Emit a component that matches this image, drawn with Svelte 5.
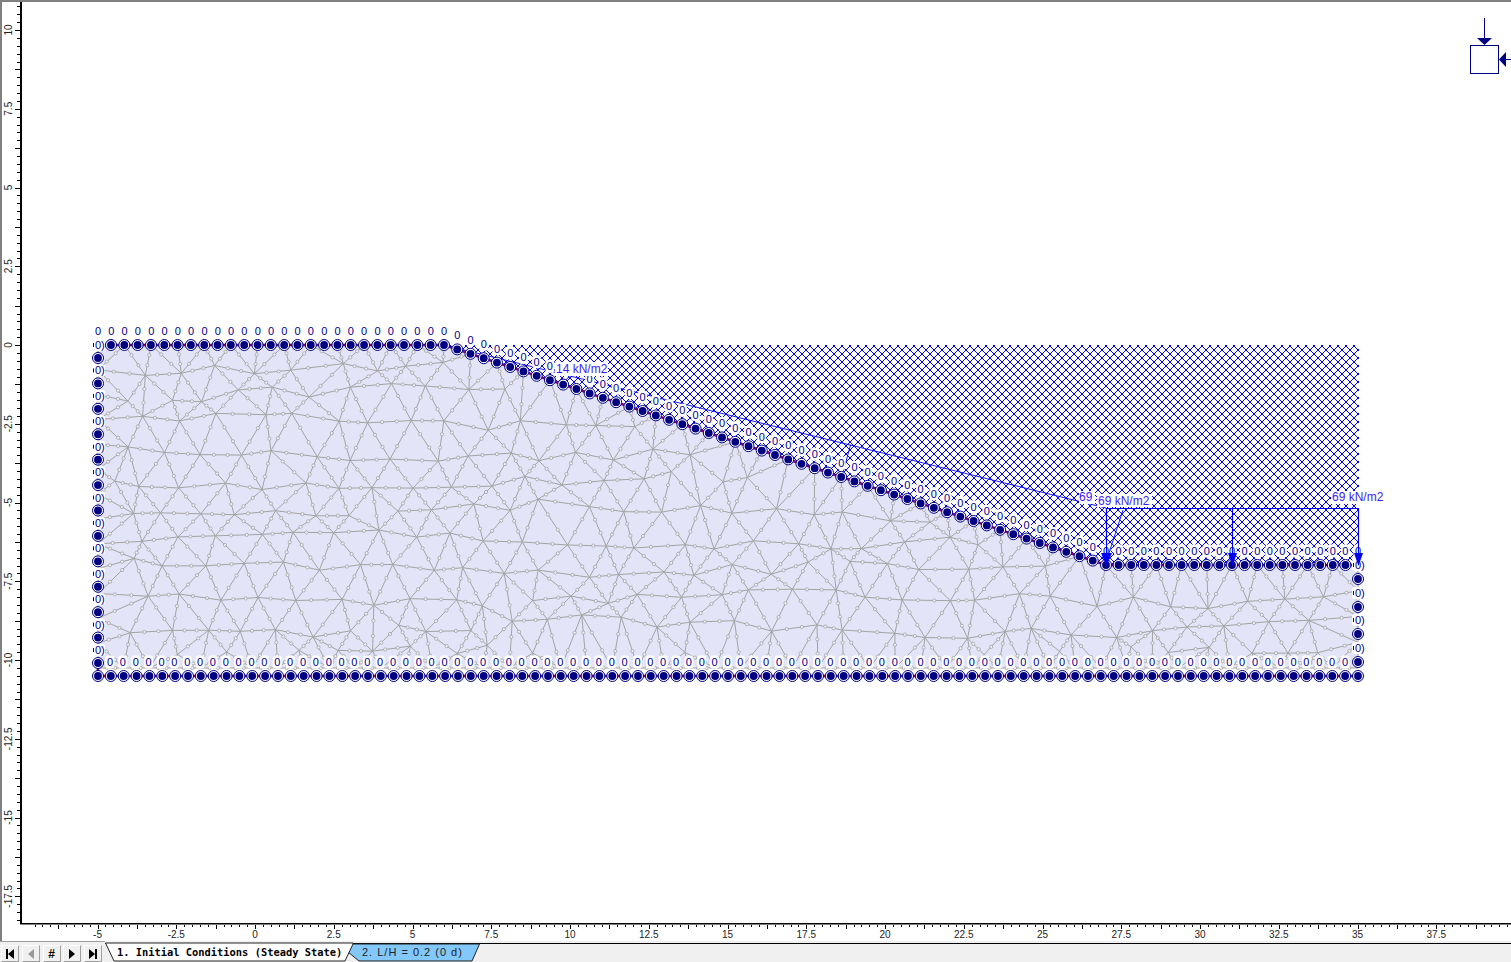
<script>
    // world -> pixel helpers for the plot
    const px = (v) => 255 + v * 31.5;
    const py = (v) => 345 - v * 31.5;

    const topY = (x) => (x < 444 ? 345 : x < 1106 ? 345 + (x - 444) * 0.3323 : 565);
    const meshBottom = 668;

    function range(from, to, n) {
        const out = [];
        for (let i = 0; i <= n; i++) out.push(from + ((to - from) * i) / n);
        return out;
    }

    // boundary nodes
    const topNodes = range(111, 444, 25).map((x) => ({ x, y: 345 }));
    const slopeNodes = range(444, 1106, 50).slice(1).map((x) => ({ x, y: topY(x) }));
    const flatNodes = range(1106, 1358, 20).slice(1).map((x) => ({ x, y: 565 }));
    const bottomNodes = range(98, 1358, 98).map((x) => ({ x, y: 676 }));
    const leftNodes = range(358, 663, 12).map((y) => ({ x: 98, y }));
    const rightNodes = [579, 607, 634, 662].map((y) => ({ x: 1358, y }));
    const nodes = [...topNodes, ...slopeNodes, ...flatNodes, ...bottomNodes, ...leftNodes, ...rightNodes];

    // the two slope labels behind "14 kN/m2" are fully covered in the original
    const labels = [
        ...range(98, 444, 26).map((x) => ({ x, y: 331 })),
        ...range(444, 1106, 50).slice(1, -1).filter((x) => x < 556 || x > 585).map((x) => ({ x, y: topY(x) - 14 })),
        ...range(1106, 1358, 20).map((x) => ({ x, y: 551 })),
        ...range(110, 1345, 96).map((x) => ({ x, y: 662 }))
    ];
    const sideLabels = [
        ...range(345, 650, 12).map((y) => ({ x: 98, y })),
        ...[565, 593, 620, 648].map((y) => ({ x: 1358, y }))
    ];

    // hatch: long aliased diagonals, clipped to the load area
    let hatchPath = "";
    for (let c = 960 - 8 * 130; c < 1020; c += 8) {
        hatchPath += `M${c + 345.5} 345.5L${c + 565.5} 565.5`;
    }
    for (let c = 1652 - 8 * 110; c < 1960; c += 8) {
        hatchPath += `M${c - 345.5} 345.5L${c - 565.5} 565.5`;
    }

    // mesh: jittered lattice + delaunay
    let seed = 20211;
    function rnd() {
        seed = (seed * 1664525 + 1013904223) % 4294967296;
        return seed / 4294967296;
    }

    function buildMesh() {
        const pts = [];
        range(98, 444, 13).forEach((x) => pts.push([x, 345]));
        range(444, 1106, 25).slice(1).forEach((x) => pts.push([x, topY(x)]));
        range(1106, 1358, 10).slice(1).forEach((x) => pts.push([x, 565]));
        range(565, meshBottom, 4).slice(1).forEach((y) => pts.push([1358, y]));
        range(98, 1358, 49).slice(0, -1).forEach((x) => pts.push([x, meshBottom]));
        range(345, meshBottom, 13).slice(1, -1).forEach((y) => pts.push([98, y]));

        let row = 0;
        for (let y = 366; y < meshBottom - 10; y += 29, row++) {
            for (let x = 108 + (row % 2) * 19; x < 1352; x += 38) {
                const wave = Math.sin(x / 130 + row * 1.4) * 6;
                const jx = x + (rnd() - 0.5) * 16;
                const jy = y + wave + (rnd() - 0.5) * 13;
                if (jy > topY(jx) + 15 && jy < meshBottom - 13 && jx > 112 && jx < 1344) pts.push([jx, jy]);
            }
        }

        const sup = [[-3000, -3000], [5000, -3000], [700, 6000]];
        const all = [...pts, ...sup];
        const n = pts.length;
        let tris = [[n, n + 1, n + 2]];

        function inCircle(t, p) {
            const [a, b, c] = t.map((i) => all[i]);
            const ax = a[0] - p[0], ay = a[1] - p[1];
            const bx = b[0] - p[0], by = b[1] - p[1];
            const cx = c[0] - p[0], cy = c[1] - p[1];
            const det =
                (ax * ax + ay * ay) * (bx * cy - cx * by) -
                (bx * bx + by * by) * (ax * cy - cx * ay) +
                (cx * cx + cy * cy) * (ax * by - bx * ay);
            const orient = (b[0] - a[0]) * (c[1] - a[1]) - (b[1] - a[1]) * (c[0] - a[0]);
            return orient > 0 ? det > 0 : det < 0;
        }

        pts.forEach((p, i) => {
            const bad = [];
            const good = [];
            tris.forEach((t) => (inCircle(t, p) ? bad : good).push(t));
            const count = new Map();
            bad.forEach((t) => {
                [[t[0], t[1]], [t[1], t[2]], [t[2], t[0]]].forEach(([a, b]) => {
                    const k = a < b ? a + "_" + b : b + "_" + a;
                    count.set(k, (count.get(k) || 0) + 1);
                });
            });
            count.forEach((c, k) => {
                if (c === 1) {
                    const [a, b] = k.split("_").map(Number);
                    good.push([a, b, i]);
                }
            });
            tris = good;
        });

        const edges = new Map();
        tris.forEach((t) => {
            if (t.some((i) => i >= n)) return;
            const cx = (all[t[0]][0] + all[t[1]][0] + all[t[2]][0]) / 3;
            const cy = (all[t[0]][1] + all[t[1]][1] + all[t[2]][1]) / 3;
            if (cy < topY(cx)) return;
            [[t[0], t[1]], [t[1], t[2]], [t[2], t[0]]].forEach(([a, b]) => {
                edges.set(a < b ? a + "_" + b : b + "_" + a, [all[a], all[b]]);
            });
        });
        return [...edges.values()];
    }

    const edges = buildMesh();
    const meshPath = edges
        .map(([a, b]) => `M${a[0].toFixed(1)} ${a[1].toFixed(1)}L${b[0].toFixed(1)} ${b[1].toFixed(1)}`)
        .join("");
    const meshDots = edges.flatMap(([a, b]) => [
        { x: a[0] + (b[0] - a[0]) / 3, y: a[1] + (b[1] - a[1]) / 3 },
        { x: a[0] + ((b[0] - a[0]) * 2) / 3, y: a[1] + ((b[1] - a[1]) * 2) / 3 }
    ]);

    // rulers
    const xMinor = [];
    for (let v = -7; v <= 40; v += 0.25) if (px(v) > 24 && px(v) < 1511) xMinor.push(v);
    const yMinor = [];
    for (let v = 10.75; v >= -18.25; v -= 0.25) yMinor.push(v);
    const isMajor = (v) => Math.abs(v / 1.25 - Math.round(v / 1.25)) < 0.001;
    const xLabels = range(-5, 37.5, 17);
    const yLabels = range(10, -17.5, 11);
</script>

<div class="window">
    <svg class="plot" width="1511" height="941" viewBox="0 0 1511 941">
        <defs>
            <clipPath id="hatch-area">
                <polygon points="444,345 1359,345 1359,565 1106,565" />
            </clipPath>
        </defs>

        <rect x="0" y="0" width="1511" height="941" fill="#fff" />
        <rect x="0" y="0" width="1511" height="2" fill="#808080" />
        <rect x="0" y="0" width="2" height="941" fill="#808080" />

        <!-- soil region and mesh -->
        <polygon class="soil" points="98,345 444,345 1106,565 1358,565 1358,{meshBottom} 98,{meshBottom}" />
        <path class="mesh" d={meshPath} />
        {#each meshDots as d}
            <circle class="dot" cx={d.x} cy={d.y} r="1.6" />
        {/each}

        <!-- load hatch -->
        <g clip-path="url(#hatch-area)">
            <path class="hatch" d={hatchPath} />
        </g>

        <!-- boundary line -->
        <polyline class="bound" points="98,345 444,345 1106,565 1358,565" />
        <polyline class="bound" points="98,663 98,676 1358,676" />

        <!-- sloped load line -->
        <polyline class="load slim" points="444,345 1106,508" />
        <line class="load slim" x1="850.5" y1="445" x2="842" y2="476" />
        <line class="load slim" x1="569" y1="377" x2="561" y2="384" />

        <!-- nodes -->
        {#each nodes as n}
            <circle class="ring" cx={n.x} cy={n.y} r="5.5" />
            <circle class="core" cx={n.x} cy={n.y} r="3.9" />
        {/each}

        <!-- head labels -->
        {#each labels as l}
            <rect class="halo" x={l.x - 4.5} y={l.y - 6.5} width="9" height="13" rx="3" />
            <text class="zero" x={l.x} y={l.y + 4}>0</text>
        {/each}
        {#each sideLabels as l}
            <rect class="halo" x={l.x - 6} y={l.y - 6} width="13" height="12" rx="3" />
            <rect class="sidemark" x={l.x - 5} y={l.y - 2} width="1" height="4" />
            <text class="zero side" x={l.x - 3} y={l.y + 4}>0)</text>
        {/each}

        <!-- uniform load frame goes over the labels -->
        <polyline class="load" points="1106.5,508.5 1358.5,508.5 1358.5,556" />
        <line class="load" x1="1106.5" y1="508" x2="1106.5" y2="556" />
        <line class="load" x1="1232.5" y1="508" x2="1232.5" y2="556" />
        <line class="load slim" x1="1123" y1="510" x2="1108" y2="556" />
        <polygon class="head" points="1101,553 1112,553 1106.5,566" />
        <polygon class="head" points="1228,553 1237,553 1232.5,566" />
        <polygon class="head" points="1354,553 1363,553 1358.5,566" />

        <!-- load texts -->
        <rect class="halo" x="555" y="362" width="53" height="14" />
        <text class="loadtext" x="556" y="373">14 kN/m2</text>
        <rect class="halo" x="1079" y="491" width="16" height="13" />
        <text class="loadtext" x="1079" y="501">69</text>
        <rect class="halo" x="1097" y="494" width="55" height="13" />
        <text class="loadtext" x="1098" y="505">69 kN/m2</text>
        <rect class="halo" x="1331" y="491" width="55" height="13" />
        <text class="loadtext" x="1332" y="501">69 kN/m2</text>

        <!-- stress icon -->
        <rect class="stress" x="1470.5" y="45.5" width="28" height="28" />
        <path class="stress" d="M1484.5 18V38M1511 59.5H1506" />
        <polygon class="stress-head" points="1477,38 1492,38 1484.5,45" />
        <polygon class="stress-head" points="1499,59.5 1506,52 1506,67" />

        <!-- rulers -->
        <rect x="20" y="2" width="2" height="922" fill="#000" />
        <rect x="20" y="923" width="1491" height="1.5" fill="#000" />
        {#each xMinor as v}
            <rect x={Math.round(px(v))} y="925" width="1" height={isMajor(v) ? 4 : 2} fill="#000" />
        {/each}
        {#each yMinor as v}
            <rect x={isMajor(v) ? 15 : 17} y={Math.round(py(v))} width={isMajor(v) ? 5 : 3} height="1" fill="#000" />
        {/each}
        {#each xLabels as v}
            <text class="tick" x={px(v)} y="938">{v}</text>
        {/each}
        {#each yLabels as v}
            <text class="tick" transform="translate(12 {py(v)}) rotate(-90)">{v}</text>
        {/each}
    </svg>

    <div class="tabbar">
        <div class="buttons">
            <button aria-label="first">
                <svg width="12" height="12" viewBox="0 0 12 12"><path d="M2 1h2v10H2zM10 1v10L4 6z" /></svg>
            </button>
            <button aria-label="previous" class="off">
                <svg width="12" height="12" viewBox="0 0 12 12"><path d="M9 1v10L3 6z" /></svg>
            </button>
            <button class="hash">#</button>
            <button aria-label="next">
                <svg width="12" height="12" viewBox="0 0 12 12"><path d="M3 1v10l6-5z" /></svg>
            </button>
            <button aria-label="last">
                <svg width="12" height="12" viewBox="0 0 12 12"><path d="M2 1v10l6-5zM8 1h2v10H8z" /></svg>
            </button>
        </div>
        <svg class="tabs" width="1406" height="21" viewBox="105 941 1406 21">
            <rect x="105" y="943" width="1406" height="1" fill="#000" />
            <polygon points="351,944 479.5,944 472,961 359,961 348,952" fill="#82c8fb" stroke="#222" stroke-width="1" />
            <polygon points="105.5,943 114,961 345,961 353,944 353,943" fill="#fff" stroke="#222" stroke-width="1" />
            <text class="tab-on" x="117" y="956">1. Initial Conditions (Steady State)</text>
            <text class="tab-off" x="362" y="956">2. L/H = 0.2 (0 d)</text>
        </svg>
    </div>
</div>

<style>
    :global(body) {
        margin: 0;
        background: #fff;
    }
    .window {
        width: 1511px;
        height: 962px;
        display: flex;
        flex-direction: column;
        overflow: hidden;
    }
    .plot {
        display: block;
        flex: none;
    }
    .soil {
        fill: #e3e4f7;
    }
    .mesh {
        fill: none;
        stroke: #a3a3a3;
        stroke-width: 1;
    }
    .dot {
        fill: #eeeefa;
        stroke: #a3a3a3;
        stroke-width: 0.8;
    }
    .hatch {
        fill: none;
        stroke: #0000ff;
        stroke-width: 1;
        shape-rendering: crispEdges;
    }
    .bound {
        fill: none;
        stroke: #80007c;
        stroke-width: 2.5;
    }
    .load {
        fill: none;
        stroke: #0000f0;
        stroke-width: 1.2;
    }
    .load.slim {
        stroke-width: 0.9;
    }
    .head {
        fill: #0000f0;
    }
    .ring {
        fill: #fff;
        stroke: #000080;
        stroke-width: 1;
    }
    .core {
        fill: #000080;
    }
    .halo {
        fill: #fff;
    }
    .sidemark {
        fill: #00008b;
    }
    text {
        font-family: "Liberation Sans", Arial, sans-serif;
    }
    .zero {
        font-size: 11px;
        fill: #00008b;
        text-anchor: middle;
    }
    .zero.side {
        text-anchor: start;
    }
    .loadtext {
        font-size: 12px;
        fill: #3a1cff;
    }
    .stress {
        fill: none;
        stroke: #000080;
        stroke-width: 1;
    }
    .stress-head {
        fill: #000080;
    }
    .tick {
        font-size: 10px;
        fill: #222;
        text-anchor: middle;
    }
    .tabbar {
        height: 21px;
        display: flex;
        background: #f0f0f0;
        border-top: 0;
    }
    .buttons {
        width: 105px;
        flex: none;
        display: flex;
        gap: 2.75px;
        padding: 3px 0 0 1px;
        box-sizing: border-box;
        border-top: 1px solid #a0a0a0;
    }
    button {
        width: 18px;
        height: 17px;
        padding: 0;
        display: flex;
        align-items: center;
        justify-content: center;
        background: #f0f0f0;
        border: 1px solid;
        border-color: #fff #a0a0a0 #a0a0a0 #fff;
        border-radius: 0;
    }
    button path {
        fill: #000;
    }
    button.off path {
        fill: #9a9a9a;
    }
    .hash {
        font: bold 12px "Liberation Sans", Arial, sans-serif;
        color: #000;
    }
    .tabs {
        flex: none;
        display: block;
    }
    .tab-on {
        font-family: "DejaVu Sans Mono", monospace;
        font-size: 10.4px;
        font-weight: bold;
        fill: #000;
    }
    .tab-off {
        font-size: 11px;
        letter-spacing: 1px;
        fill: #222;
    }
</style>
